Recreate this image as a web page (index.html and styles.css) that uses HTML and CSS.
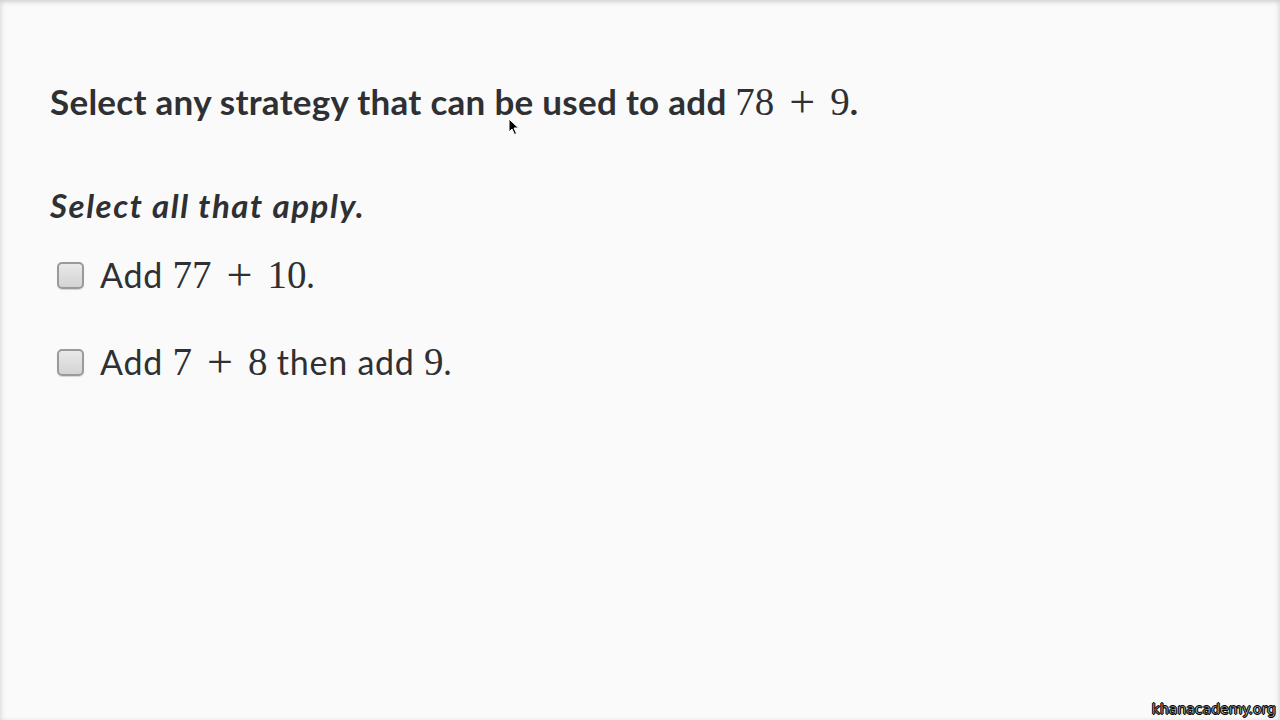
FILE: index.html
```html
<!DOCTYPE html>
<html>
<head>
<meta charset="utf-8">
<link rel="stylesheet" href="styles.css">
</head>
<body>
<div class="frame">
  <main class="content">
    <h1 class="question">Select any strategy that can be used to add <span class="math">78<span class="op">+</span>9</span>.</h1>
    <p class="instruction">Select all that apply.</p>
    <ul class="choices">
      <li class="choice"><span class="box"></span><span class="label">Add <span class="math">77<span class="op">+</span>10</span>.</span></li>
      <li class="choice"><span class="box"></span><span class="label">Add <span class="math">7<span class="op">+</span>8</span> then add <span class="math">9</span>.</span></li>
    </ul>
  </main>
  <svg class="cursor" width="12" height="18" viewBox="0 0 12 18"><path d="M1 1 L1 14 L4 11 L6.5 16.5 L8.5 15.5 L6 10 L10.5 10 Z" fill="#000" stroke="#fff" stroke-width="1"/></svg>
  <div class="watermark">khanacademy.org</div>
</div>
</body>
</html>
```
FILE: styles.css
```css
html, body {
  margin: 0;
  padding: 0;
  width: 1280px;
  height: 720px;
  overflow: hidden;
  background: #fafafa;
}
.frame {
  position: relative;
  width: 1280px;
  height: 720px;
  box-sizing: border-box;
  background: #fafafa;
  box-shadow: inset 0 3px 4px rgba(0,0,0,0.10), inset 3px 0 4px rgba(0,0,0,0.05), inset -3px 0 4px rgba(0,0,0,0.05);
  font-family: Lato, "Noto Sans", sans-serif;
  color: #2e3033;
}
.content {
  padding: 76px 0 0 50px;
}
.question {
  margin: 0;
  font-size: 35px;
  font-weight: 700;
  line-height: 50px;
  letter-spacing: 0.28px;
}
.math {
  font-family: "Liberation Serif", "DejaVu Serif", serif;
  font-weight: 400;
  font-size: 39px;
  letter-spacing: 0;
}
.op {
  display: inline-block;
  margin: 0 15px;
  font-size: 46px;
  line-height: 0;
  vertical-align: -0.04em;
}
.instruction {
  margin: 55px 0 0 0;
  font-size: 33px;
  font-weight: 700;
  font-style: italic;
  line-height: 46px;
  letter-spacing: 1.55px;
}
.choices {
  list-style: none;
  margin: 24px 0 0 0;
  padding: 0;
  display: flex;
  flex-direction: column;
  gap: 41px;
}
.choice {
  display: flex;
  align-items: center;
  gap: 16px;
  font-size: 34px;
  line-height: 46px;
  letter-spacing: 0.75px;
  padding-left: 7px;
}
.box {
  width: 23px;
  height: 23px;
  border: 2px solid #9a9a9a;
  border-radius: 5px;
  background: linear-gradient(#e9e9e9, #d3d3d3);
  box-shadow: 0 1px 1px rgba(0,0,0,0.15);
  flex: none;
}
.cursor {
  position: absolute;
  left: 508px;
  top: 118px;
}
.watermark {
  position: absolute;
  right: 4px;
  bottom: 3px;
  font-family: "DejaVu Sans", sans-serif;
  font-size: 14px;
  color: #fff;
  -webkit-text-stroke: 0.6px #000;
  text-shadow: 1px 0 0 #000, -1px 0 0 #000, 0 1px 0 #000, 0 -1px 0 #000;
}
```
